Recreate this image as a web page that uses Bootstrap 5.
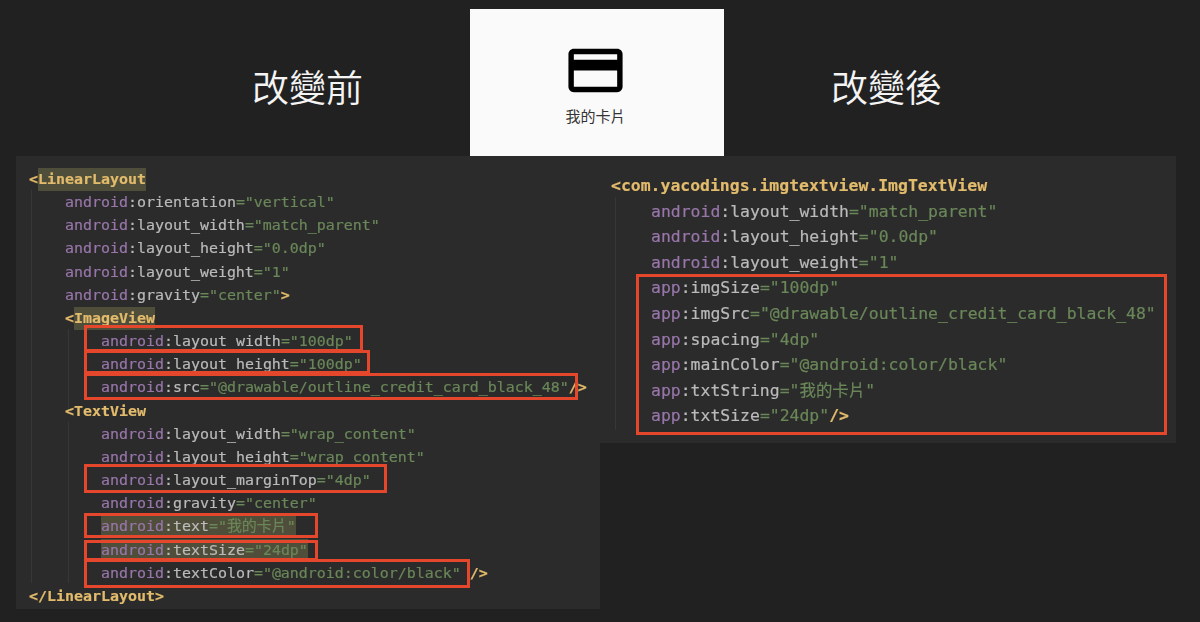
<!DOCTYPE html>
<html lang="zh-Hant">
<head>
<meta charset="utf-8">
<title>改變前 / 改變後</title>
<link href="https://cdn.jsdelivr.net/npm/bootstrap@5.3.0/dist/css/bootstrap.min.css" rel="stylesheet">
<style>
html,body{height:622px;overflow:hidden;background:#212121;}
body{width:1200px;font-family:"Noto Sans CJK TC",sans-serif;}
.toprow{height:156px;}
.ttl{font-size:37px;line-height:48px;color:#f4f4f4;font-weight:350;margin:0;padding-top:16px;font-family:"Noto Sans CJK TC",sans-serif;}
.ttl-l{width:470px;padding-left:252px;}
.ttl-r{padding-left:107px;}
.shot{width:254px;margin-top:9px;background:#fafafa;padding-top:29px;padding-right:3px;}
.shot svg{width:65px;height:65px;display:block;}
.shot-t{font-size:15px;line-height:20px;margin-top:3px;color:#333;}
.editors{padding-left:16px;align-items:flex-start;}
.ed{background:#2b2b2b;position:relative;font-family:"DejaVu Sans Mono","Noto Sans CJK TC",monospace;color:#bababa;white-space:nowrap;filter:blur(.4px);-webkit-text-stroke:.2px;}
.ed-a{width:584px;height:453px;padding:12px 0 0 13px;font-size:14.95px;line-height:23.17px;}
.ed-b{width:576px;height:287px;padding:17px 0 0 11px;font-size:16.45px;line-height:25.6px;}
.ln{height:23.17px;}
.ed-b .ln{height:25.6px;}
.i1{padding-left:36px;}
.i2{padding-left:72px;}
.ed-b .i1{padding-left:40px;}
.tg{color:#e2bb6c;font-weight:600;}
.ns{color:#9876aa;}
.vl{color:#6a8759;}
.mk{background:#4f4e3a;display:inline-block;height:23px;line-height:23px;vertical-align:top;}
.red{position:absolute;border:3.5px solid #e4472c;pointer-events:none;}
.guide{position:absolute;width:1px;background:#373737;}
.r1{left:68px;top:169px;width:279px;height:27px;}
.r2{left:68px;top:194px;width:286px;height:24px;}
.r3{left:68px;top:217px;width:494px;height:27px;}
.r4{left:68px;top:308px;width:303px;height:29px;}
.r5{left:68px;top:357px;width:234px;height:25px;}
.r6{left:68px;top:384px;width:234px;height:21px;}
.r7{left:68px;top:403px;width:386px;height:29px;}
.r8{left:36px;top:118px;width:531px;height:161px;}
.g1{left:15px;top:34px;height:393px;}
.g2{left:52px;top:173px;height:80px;}
.g3{left:52px;top:266px;height:161px;}
.g4{left:15px;top:41px;height:233px;}
</style>
</head>
<body>
<div class="d-flex toprow">
  <div class="ttl-l d-flex align-items-center"><h1 class="ttl">改變前</h1></div>
  <div class="shot d-flex flex-column align-items-center">
    <svg viewBox="0 0 24 24" aria-hidden="true"><path fill="#000" d="M20 4H4c-1.11 0-1.99.89-1.99 2L2 18c0 1.11.89 2 2 2h16c1.11 0 2-.89 2-2V6c0-1.11-.89-2-2-2zm0 14H4v-6h16v6zm0-10H4V6h16v2z"/></svg>
    <div class="shot-t">我的卡片</div>
  </div>
  <div class="ttl-r d-flex align-items-center"><h1 class="ttl">改變後</h1></div>
</div>
<div class="d-flex editors">
  <div class="ed ed-a">
    <div class="ln"><span class="tg">&lt;<span class="mk">LinearLayout</span></span></div>
    <div class="ln i1"><span class="ns">android</span>:orientation<span class="vl">="vertical"</span></div>
    <div class="ln i1"><span class="ns">android</span>:layout_width<span class="vl">="match_parent"</span></div>
    <div class="ln i1"><span class="ns">android</span>:layout_height<span class="vl">="0.0dp"</span></div>
    <div class="ln i1"><span class="ns">android</span>:layout_weight<span class="vl">="1"</span></div>
    <div class="ln i1"><span class="ns">android</span>:gravity<span class="vl">="center"</span><span class="tg">&gt;</span></div>
    <div class="ln i1"><span class="tg">&lt;<span class="mk">ImageView</span></span></div>
    <div class="ln i2"><span class="ns">android</span>:layout_width<span class="vl">="100dp"</span></div>
    <div class="ln i2"><span class="ns">android</span>:layout_height<span class="vl">="100dp"</span></div>
    <div class="ln i2"><span class="ns">android</span>:src<span class="vl">="@drawable/outline_credit_card_black_48"</span><span class="tg">/&gt;</span></div>
    <div class="ln i1"><span class="tg">&lt;TextView</span></div>
    <div class="ln i2"><span class="ns">android</span>:layout_width<span class="vl">="wrap_content"</span></div>
    <div class="ln i2"><span class="ns">android</span>:layout_height<span class="vl">="wrap_content"</span></div>
    <div class="ln i2"><span class="ns">android</span>:layout_marginTop<span class="vl">="4dp"</span></div>
    <div class="ln i2"><span class="ns">android</span>:gravity<span class="vl">="center"</span></div>
    <div class="ln i2"><span class="mk"><span class="ns">android</span>:text<span class="vl">="我的卡片"</span></span></div>
    <div class="ln i2"><span class="mk"><span class="ns">android</span>:textSize<span class="vl">="24dp"</span></span></div>
    <div class="ln i2"><span class="ns">android</span>:textColor<span class="vl">="@android:color/black"</span> <span class="tg">/&gt;</span></div>
    <div class="ln"><span class="tg">&lt;/LinearLayout&gt;</span></div>
    <span class="guide g1"></span><span class="guide g2"></span><span class="guide g3"></span>
    <span class="red r1"></span><span class="red r2"></span><span class="red r3"></span><span class="red r4"></span><span class="red r5"></span><span class="red r6"></span><span class="red r7"></span>
  </div>
  <div class="ed ed-b">
    <div class="ln"><span class="tg">&lt;com.yacodings.imgtextview.ImgTextView</span></div>
    <div class="ln i1"><span class="ns">android</span>:layout_width<span class="vl">="match_parent"</span></div>
    <div class="ln i1"><span class="ns">android</span>:layout_height<span class="vl">="0.0dp"</span></div>
    <div class="ln i1"><span class="ns">android</span>:layout_weight<span class="vl">="1"</span></div>
    <div class="ln i1"><span class="ns">app</span>:imgSize<span class="vl">="100dp"</span></div>
    <div class="ln i1"><span class="ns">app</span>:imgSrc<span class="vl">="@drawable/outline_credit_card_black_48"</span></div>
    <div class="ln i1"><span class="ns">app</span>:spacing<span class="vl">="4dp"</span></div>
    <div class="ln i1"><span class="ns">app</span>:mainColor<span class="vl">="@android:color/black"</span></div>
    <div class="ln i1"><span class="ns">app</span>:txtString<span class="vl">="我的卡片"</span></div>
    <div class="ln i1"><span class="ns">app</span>:txtSize<span class="vl">="24dp"</span><span class="tg">/&gt;</span></div>
    <span class="guide g4"></span>
    <span class="red r8"></span>
  </div>
</div>
<script src="https://cdn.jsdelivr.net/npm/bootstrap@5.3.0/dist/js/bootstrap.bundle.min.js"></script>
</body>
</html>
